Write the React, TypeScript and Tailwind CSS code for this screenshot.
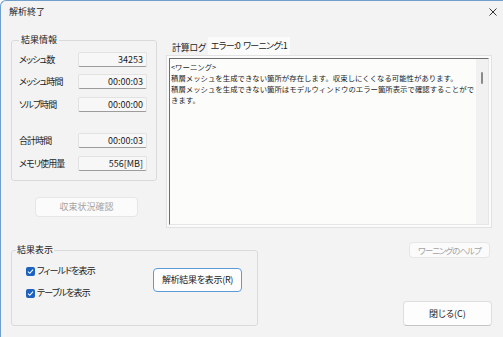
import React from "react";

const font =
  "font-['Noto_Sans_CJK_JP','Noto_Sans',sans-serif] [font-feature-settings:'palt']";

function ValueRow({ label, value, className = "" }: { label: string; value: string; className?: string }) {
  return (
    <div className={`flex h-[15px] items-center ${className}`}>
      <span className="w-[59px] whitespace-nowrap tracking-[-0.9px]">{label}</span>
      <div className="flex h-[15px] w-[69px] items-center justify-end rounded-[2px] border border-[#e2e2e2] border-b-[#9c9c9c] bg-[#f7f7f7] pr-[3px]">
        {value}
      </div>
    </div>
  );
}

function Check({ label, className = "" }: { label: string; className?: string }) {
  return (
    <div className={`flex h-[12px] items-center gap-[2px] ${className}`}>
      <span className="flex h-[9px] w-[9px] items-center justify-center rounded-[2px] bg-[#1b63bf]">
        <svg width="7" height="7" viewBox="0 0 7 7">
          <path d="M1 3.6 L2.8 5.3 L6 1.6" fill="none" stroke="white" strokeWidth="1.1" />
        </svg>
      </span>
      <span className="whitespace-nowrap tracking-[-0.9px]">{label}</span>
    </div>
  );
}

export default function App() {
  return (
    <div
      className={`flex h-[337px] w-[503px] flex-col overflow-hidden rounded-tl-[6px] border-l border-t border-[#6f9fca] bg-[#f3f3f3] text-[9px] leading-[12px] text-[#1b1b1b] ${font}`}
    >
      {/* title bar */}
      <div className="flex h-[22px] items-center justify-between pl-[8px] pr-[6px]">
        <span className="text-[9px]">解析終了</span>
        <svg width="8" height="8" viewBox="0 0 8 8">
          <path d="M0.5 0.5 L7.5 7.5 M7.5 0.5 L0.5 7.5" stroke="#333" strokeWidth="1" />
        </svg>
      </div>

      {/* top area */}
      <div className="flex h-[205px]">
        <div className="ml-[10px] flex w-[146px] flex-col">
          <fieldset className="mt-[11px] h-[147px] rounded-[3px] border border-[#dadada] pl-[7px]">
            <legend className="px-[2px] leading-[12px]">結果情報</legend>
            <ValueRow className="mt-[6px]" label="メッシュ数" value="34253" />
            <ValueRow className="mt-[7px]" label="メッシュ時間" value="00:00:03" />
            <ValueRow className="mt-[8px]" label="ソルブ時間" value="00:00:00" />
            <ValueRow className="mt-[21px]" label="合計時間" value="00:00:03" />
            <ValueRow className="mt-[8px]" label="メモリ使用量" value="556[MB]" />
          </fieldset>
          <button className="ml-[24px] mt-[16px] h-[20px] w-[103px] rounded-[4px] border border-[#e6e6e6] bg-[#fbfbfb] text-[#a3a3a3]">
            収束状況確認
          </button>
        </div>

        <div className="ml-[9px] flex w-[326px] flex-col">
          <div className="mt-[14px] flex h-[18px] items-end">
            <div className="flex h-[14px] items-center whitespace-nowrap pl-[6px] pr-[2px] tracking-[-0.3px]">計算ログ</div>
            <div className="flex h-[18px] items-center whitespace-nowrap bg-[#fbfbfb] pl-[3px] pr-[3px] tracking-[-0.7px]">
              <span>エラー:0</span>
              <span className="ml-[3px]">ワーニング:1</span>
            </div>
          </div>
          <div className="h-[173px] border border-[#e2e2e2] bg-[#fbfbfb] p-[2px]">
            <div className="flex h-full border-b border-l border-r border-t border-[#6e6e6e] border-b-[#e6e6e6] border-r-[#e6e6e6] bg-[#fcfdfb]">
              <div className="flex-1 pl-[1px] pt-[2px] text-[7.4px] leading-[11px] [font-feature-settings:normal]">
                <div className="whitespace-nowrap">&lt;ワーニング&gt;</div>
                <div className="whitespace-nowrap">積層メッシュを生成できない箇所が存在します。収束しにくくなる可能性があります。</div>
                <div className="whitespace-nowrap">積層メッシュを生成できない箇所はモデルウィンドウのエラー箇所表示で確認することがで</div>
                <div className="whitespace-nowrap">きます。</div>
              </div>
              <div className="flex w-[12px] justify-center bg-[#f1f1f1] pt-[13px]">
                <div className="h-[12px] w-[2px] rounded-full bg-[#8a8a8a]" />
              </div>
            </div>
          </div>
        </div>
      </div>

      {/* bottom area */}
      <div className="flex flex-1">
        <fieldset className="ml-[10px] mt-[16px] h-[82px] w-[247px] rounded-[3px] border border-[#dadada] pl-[4px]">
          <legend className="px-[1px] leading-[12px]">結果表示</legend>
          <div className="flex pl-[10px]">
            <div className="flex w-[127px] flex-col">
              <Check className="mt-[9px]" label="フィールドを表示" />
              <Check className="mt-[10px]" label="テーブルを表示" />
            </div>
            <button className="mt-[12px] h-[24px] w-[89px] whitespace-nowrap rounded-[4px] border border-[#5b9bd8] bg-[#fdfdfd] tracking-[-0.3px]">
              解析結果を表示(R)
            </button>
          </div>
        </fieldset>
        <div className="ml-auto mr-[11px] flex flex-col items-end">
          <button className="mr-[2px] mt-[14px] h-[16px] w-[81px] whitespace-nowrap rounded-[4px] border border-[#e6e6e6] bg-[#fbfbfb] text-[8.5px] text-[#a3a3a3] tracking-[-1px]">
            ワーニングのヘルプ
          </button>
          <button className="mt-[43px] h-[25px] w-[89px] rounded-[4px] border border-[#dedede] border-b-[#c4c4c4] bg-[#fdfdfd]">
            閉じる(C)
          </button>
        </div>
      </div>
    </div>
  );
}
